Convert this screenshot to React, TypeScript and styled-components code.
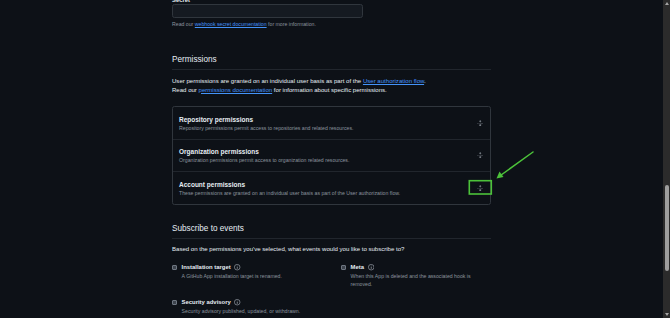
import React from "react";
import styled, { createGlobalStyle } from "styled-components";

const Global = createGlobalStyle`
  html, body { margin: 0; padding: 0; background: #0d1117; overflow: hidden; }
  body { font-family: "Liberation Sans", Arial, sans-serif; color: #e6edf3; }
  * { box-sizing: border-box; }
`;

const Shell = styled.div`
  display: flex;
  width: 670px;
  height: 318px;
  overflow: hidden;
  background: #0d1117;
`;

const Main = styled.main`
  position: relative;
  flex: 1;
  padding-left: 172px;
  overflow: hidden;
`;

const Column = styled.div`
  width: 319px;
  display: flex;
  flex-direction: column;
  margin-top: -4px;
`;

const FieldLabel = styled.div`
  font-size: 5.9px;
  font-weight: 700;
  line-height: 8px;
`;

const Input = styled.div`
  width: 191px;
  height: 14px;
  background: #151a21;
  border: 0.5px solid #30363d;
  border-radius: 2.4px;
`;

const Note = styled.div`
  margin-top: 2.5px;
  font-size: 5.2px;
  line-height: 7px;
  color: #8b949e;
`;

const Link = styled.a`
  color: #4493f8;
  text-decoration: underline;
  text-underline-offset: 1px;
`;

const SectionHeading = styled.h2<{ $top: number }>`
  margin: ${(p) => p.$top}px 0 0;
  font-size: 8.2px;
  font-weight: 400;
  line-height: 12px;
  padding-bottom: 3px;
  border-bottom: 1px solid #21262d;
  color: #e6edf3;
`;

const Para = styled.p<{ $top: number }>`
  margin: ${(p) => p.$top}px 0 0;
  font-size: 6.05px;
  line-height: 9px;
  color: #e6edf3;
`;

const PermBox = styled.div`
  margin-top: 11.5px;
  border: 1px solid #30363d;
  border-radius: 2.4px;
  display: flex;
  flex-direction: column;
`;

const PermRow = styled.div`
  display: flex;
  align-items: center;
  justify-content: space-between;
  padding: 7.5px 6px 7px 6px;
  & + & { border-top: 1px solid #21262d; }
`;

const PermText = styled.div`
  display: flex;
  flex-direction: column;
  gap: 1px;
`;

const PermTitle = styled.div`
  font-size: 6.5px;
  font-weight: 700;
  line-height: 9px;
  color: #e6edf3;
`;

const PermDesc = styled.div`
  font-size: 5.2px;
  line-height: 7px;
  color: #8b949e;
`;

const UnfoldBtn = styled.span`
  display: flex;
  width: 8px;
  height: 8px;
  align-items: center;
  justify-content: center;
  color: #9198a1;
`;

const EventsGrid = styled.div`
  margin-top: 9px;
  display: grid;
  grid-template-columns: 169px 150px;
  row-gap: 10px;
`;

const EventItem = styled.div`
  display: flex;
  align-items: flex-start;
  gap: 5px;
`;

const Check = styled.span`
  flex: none;
  width: 4.6px;
  height: 4.6px;
  margin-top: 2.2px;
  background: #3d444d;
  border: 0.5px solid #6e7681;
  border-radius: 1px;
`;

const EventBody = styled.div`
  display: flex;
  flex-direction: column;
`;

const EventLabel = styled.div`
  display: flex;
  align-items: center;
  gap: 3.5px;
  font-size: 5.9px;
  font-weight: 700;
  line-height: 9px;
  color: #e6edf3;
`;

const EventDesc = styled.div`
  font-size: 5.2px;
  line-height: 8px;
  color: #8b949e;
  max-width: 127px;
`;

const InfoWrap = styled.span`
  display: inline-flex;
  color: #a0a7b0;
`;

const Overlay = styled.svg`
  position: absolute;
  left: 0;
  top: 0;
  width: 663px;
  height: 318px;
  pointer-events: none;
`;

const Scrollbar = styled.div`
  flex: none;
  width: 7px;
  height: 318px;
  background: #2b2b2b;
  display: flex;
  flex-direction: column;
  align-items: center;
  justify-content: space-between;
  padding: 2px 0;
`;

const Track = styled.div`
  flex: 1;
  width: 100%;
  display: flex;
  flex-direction: column;
  align-items: center;
  padding-top: 180px;
`;

const Thumb = styled.div`
  width: 4px;
  height: 86px;
  border-radius: 2px;
  background: #9e9e9e;
`;

const Arrow = styled.svg`
  width: 4px;
  height: 3px;
  fill: #a3a3a3;
`;

const Unfold = () => (
  <svg width="6.4" height="6.4" viewBox="0 0 16 16" fill="currentColor">
    <path d="m8.177.677 2.896 2.896a.25.25 0 0 1-.177.427H8.75v1.25a.75.75 0 0 1-1.5 0V4H5.104a.25.25 0 0 1-.177-.427L7.823.677a.25.25 0 0 1 .354 0ZM7.25 10.750a.75.75 0 0 1 1.5 0V12h2.146a.25.25 0 0 1 .177.427l-2.896 2.896a.25.25 0 0 1-.354 0l-2.896-2.896A.25.25 0 0 1 5.104 12H7.25v-1.25Zm-5-2a.75.75 0 0 0 0-1.5h-.5a.75.75 0 0 0 0 1.5h.5ZM6 8a.75.75 0 0 1-.75.75h-.5a.75.75 0 0 1 0-1.5h.5A.75.75 0 0 1 6 8Zm2.25.75a.75.75 0 0 0 0-1.5h-.5a.75.75 0 0 0 0 1.5h.5ZM12 8a.75.75 0 0 1-.75.75h-.5a.75.75 0 0 1 0-1.5h.5A.75.75 0 0 1 12 8Zm2.25.75a.75.75 0 0 0 0-1.5h-.5a.75.75 0 0 0 0 1.5h.5Z" />
  </svg>
);

const Info = () => (
  <InfoWrap>
    <svg width="6.4" height="6.4" viewBox="0 0 16 16">
      <circle cx="8" cy="8" r="7" fill="none" stroke="currentColor" strokeWidth="1.6" />
      <rect x="7.1" y="7" width="1.8" height="5" fill="currentColor" />
      <circle cx="8" cy="4.8" r="1.1" fill="currentColor" />
    </svg>
  </InfoWrap>
);

const perms = [
  { title: "Repository permissions", desc: "Repository permissions permit access to repositories and related resources." },
  { title: "Organization permissions", desc: "Organization permissions permit access to organization related resources." },
  { title: "Account permissions", desc: "These permissions are granted on an individual user basis as part of the User authorization flow." },
];

const events = [
  { label: "Installation target", desc: "A GitHub App installation target is renamed." },
  { label: "Meta", desc: "When this App is deleted and the associated hook is removed." },
  { label: "Security advisory", desc: "Security advisory published, updated, or withdrawn." },
];

export default function App() {
  return (
    <>
      <Global />
      <Shell>
        <Main>
          <Column>
            <FieldLabel>Secret</FieldLabel>
            <Input />
            <Note>
              Read our <Link>webhook secret documentation</Link> for more information.
            </Note>

            <SectionHeading $top={26.5}>Permissions</SectionHeading>
            <Para $top={6.5}>
              User permissions are granted on an individual user basis as part of the{" "}
              <Link>User authorization flow</Link>.
              <br />
              Read our <Link>permissions documentation</Link> for information about specific permissions.
            </Para>

            <PermBox>
              {perms.map((p) => (
                <PermRow key={p.title}>
                  <PermText>
                    <PermTitle>{p.title}</PermTitle>
                    <PermDesc>{p.desc}</PermDesc>
                  </PermText>
                  <UnfoldBtn>
                    <Unfold />
                  </UnfoldBtn>
                </PermRow>
              ))}
            </PermBox>

            <SectionHeading $top={18}>Subscribe to events</SectionHeading>
            <Para $top={6.5}>
              Based on the permissions you've selected, what events would you like to subscribe to?
            </Para>

            <EventsGrid>
              {events.map((e) => (
                <EventItem key={e.label}>
                  <Check />
                  <EventBody>
                    <EventLabel>
                      {e.label} <Info />
                    </EventLabel>
                    <EventDesc>{e.desc}</EventDesc>
                  </EventBody>
                </EventItem>
              ))}
            </EventsGrid>
          </Column>

          <Overlay viewBox="0 0 663 318">
            <rect x="469.3" y="180.7" width="22" height="13.3" fill="none" stroke="#4cc23a" strokeWidth="1.6" />
            <line x1="533" y1="152" x2="499" y2="176.5" stroke="#4cc23a" strokeWidth="1.5" strokeLinecap="round" />
            <polygon points="496.5,178.5 499.5,171.5 503.5,177" fill="#4cc23a" />
          </Overlay>
        </Main>
        <Scrollbar>
          <Arrow viewBox="0 0 4 3">
            <polygon points="2,0 4,3 0,3" />
          </Arrow>
          <Track>
            <Thumb />
          </Track>
          <Arrow viewBox="0 0 4 3">
            <polygon points="0,0 4,0 2,3" />
          </Arrow>
        </Scrollbar>
      </Shell>
    </>
  );
}
